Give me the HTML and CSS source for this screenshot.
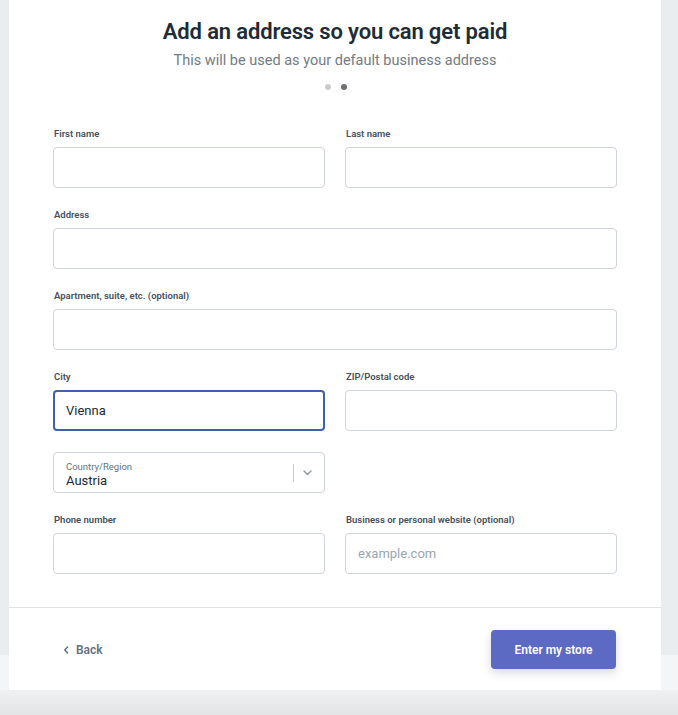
FILE: index.html
```html
<!DOCTYPE html>
<html>
<head>
<meta charset="utf-8">
<link rel="stylesheet" href="styles.css">
</head>
<body>
<div class="card">
  <div class="head">
    <h1 class="title">Add an address so you can get paid</h1>
    <p class="subtitle">This will be used as your default business address</p>
    <div class="dots"><span class="dot"></span><span class="dot dot-active"></span></div>
  </div>
  <form class="form">
    <div class="row">
      <div class="field"><label class="label">First name</label><div class="input"></div></div>
      <div class="field"><label class="label">Last name</label><div class="input"></div></div>
    </div>
    <div class="row row-single">
      <div class="field"><label class="label">Address</label><div class="input"></div></div>
    </div>
    <div class="row row-single">
      <div class="field"><label class="label">Apartment, suite, etc. (optional)</label><div class="input"></div></div>
    </div>
    <div class="row">
      <div class="field"><label class="label">City</label><div class="input input-focus"><span class="value">Vienna</span></div></div>
      <div class="field"><label class="label">ZIP/Postal code</label><div class="input"></div></div>
    </div>
    <div class="row row-select">
      <div class="field">
        <div class="input select">
          <div class="select-text">
            <span class="select-label">Country/Region</span>
            <span class="select-value">Austria</span>
          </div>
          <span class="select-sep"></span>
          <svg class="chev" width="9" height="6" viewBox="0 0 9 6"><path d="M1 1l3.5 3.5L8 1" fill="none" stroke="#8a96a3" stroke-width="1.4" stroke-linecap="round" stroke-linejoin="round"/></svg>
        </div>
      </div>
      <div class="field"></div>
    </div>
    <div class="row">
      <div class="field"><label class="label">Phone number</label><div class="input"></div></div>
      <div class="field"><label class="label">Business or personal website (optional)</label><div class="input"><span class="placeholder">example.com</span></div></div>
    </div>
  </form>
  <div class="footer">
    <a class="back"><svg width="6" height="8" viewBox="0 0 6 8"><path d="M4.5 1L1.8 4l2.7 3" fill="none" stroke="#637381" stroke-width="1.6" stroke-linecap="round" stroke-linejoin="round"/></svg>Back</a>
    <button class="primary" type="button">Enter my store</button>
  </div>
</div>
</body>
</html>
```
FILE: styles.css
```css
html, body { margin: 0; padding: 0; }
body {
  height: 715px;
  overflow: hidden;
  font-family: Roboto, "Liberation Sans", sans-serif;
  background: linear-gradient(to bottom, #e9edf0 0, #e9edf0 655px, #f4f5f7 655px, #f4f5f7 690px, #f0f1f2 690px, #e3e4e5 715px);
}
.card {
  margin: 0 0 0 9px;
  width: 652px;
  height: 690px;
  background: #fff;
  box-sizing: border-box;
}
.head {
  text-align: center;
  padding-top: 19px;
}
.title {
  margin: 0;
  font-size: 22px;
  line-height: 26px;
  font-weight: 600;
  color: #212b36;
  letter-spacing: -0.15px;
}
.subtitle {
  margin: 7px 0 0;
  font-size: 14.5px;
  line-height: 18px;
  font-weight: 400;
  color: #737b84;
}
.dots {
  display: flex;
  justify-content: center;
  gap: 10px;
  margin-top: 14px;
  padding-left: 1px;
}
.dot {
  width: 6px;
  height: 6px;
  border-radius: 50%;
  background: #c9cbcd;
}
.dot-active { background: #6b6e72; }
.form {
  padding: 36px 44px 0;
  display: flex;
  flex-direction: column;
  gap: 19px;
}
.row {
  display: grid;
  grid-template-columns: 1fr 1fr;
  column-gap: 20px;
}
.row-single { grid-template-columns: 1fr; }
.row-select { margin-top: 2px; }
.field {
  display: flex;
  flex-direction: column;
}
.label {
  display: block;
  font-size: 9.5px;
  line-height: 16px;
  font-weight: 600;
  color: #454f5b;
  margin-bottom: 5px;
  padding-left: 1px;
}
.input {
  height: 41px;
  box-sizing: border-box;
  border: 1px solid #cfd5db;
  border-radius: 4px;
  background: #fff;
  display: flex;
  align-items: center;
  padding: 0 12px;
}
.input-focus {
  border: 2px solid #3f5fb2;
  padding: 0 11px;
}
.value {
  font-size: 13px;
  color: #212b36;
}
.placeholder {
  font-size: 13px;
  color: #9aa5b1;
}
.select { padding: 0 0 0 12px; }
.select-text {
  flex: 1;
  display: flex;
  flex-direction: column;
  padding-top: 3px;
}
.select-label {
  font-size: 9.5px;
  line-height: 12px;
  color: #637381;
}
.select-value {
  font-size: 13px;
  line-height: 15px;
  color: #212b36;
}
.select-sep {
  width: 1px;
  height: 18px;
  background: #c4cdd5;
}
.chev { margin: 0 12px 0 9px; }
.footer {
  margin-top: 33px;
  border-top: 1px solid #e1e3e5;
  padding: 22px 45px 0 44px;
  display: flex;
  align-items: center;
  justify-content: space-between;
}
.back {
  display: flex;
  align-items: center;
  gap: 7px;
  padding-left: 10px;
  font-size: 12px;
  font-weight: 600;
  color: #637381;
}
.primary {
  width: 125px;
  height: 39px;
  border: none;
  border-radius: 4px;
  background: #5c6ac4;
  color: #fff;
  font-family: Roboto, "Liberation Sans", sans-serif;
  font-size: 12px;
  font-weight: 600;
  box-shadow: 0 4px 10px rgba(40, 50, 80, 0.18);
}
```
